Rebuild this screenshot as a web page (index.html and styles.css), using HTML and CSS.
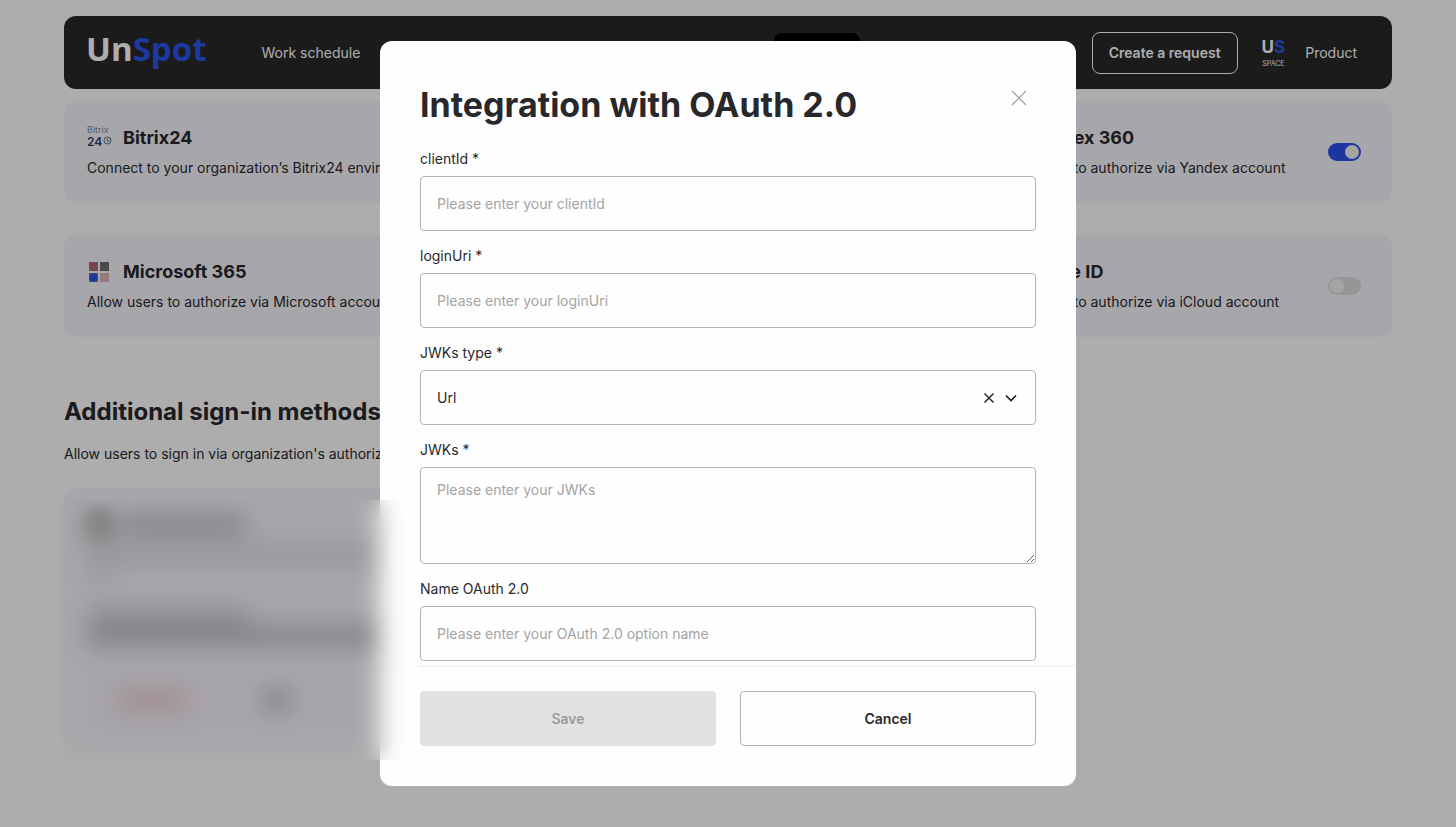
FILE: index.html
```html
<!DOCTYPE html>
<html lang="en">
<head>
<meta charset="utf-8">
<meta name="viewport" content="width=device-width, initial-scale=1">
<title>UnSpot</title>
<link rel="stylesheet" href="styles.css">
</head>
<body>
<div class="page">
  <header class="topbar">
    <a class="logo" href="#">Un<span class="logo-accent">Spot</span></a>
    <nav><a class="nav-link" href="#">Work schedule</a></nav>
    <span class="nav-active"></span>
    <button class="request" type="button">Create a request</button>
    <span class="space-logo"><span class="space-mark">U<span class="logo-accent">S</span></span><span class="space-word">SPACE</span></span>
    <a class="nav-link" href="#">Product</a>
  </header>

  <main>
    <div class="cards">
      <section class="card">
        <div class="card-text">
          <h3 class="card-title">
            <svg class="card-icon" viewBox="0 0 26 24" aria-hidden="true">
              <text class="bx-name" x="0" y="7">Bitrix</text>
              <text class="bx-num" x="0" y="20">24</text>
              <circle cx="20.500" cy="14.500" r="3.500" fill="none" stroke="#5d6c93"/>
              <path d="M20.500 12.500v2.500h2" fill="none" stroke="#5d6c93"/>
            </svg>
            Bitrix24
          </h3>
          <p class="card-desc">Connect to your organization’s Bitrix24 environment</p>
        </div>
      </section>
      <section class="card card-last">
        <div class="card-text">
          <h3 class="card-title"><span class="card-icon"></span>Yandex 360</h3>
          <p class="card-desc">Allow users to authorize via Yandex account</p>
        </div>
        <input class="toggle" type="checkbox" role="switch" aria-label="Yandex 360" checked>
      </section>
      <section class="card">
        <div class="card-text">
          <h3 class="card-title">
            <svg class="card-icon" viewBox="0 0 26 24" aria-hidden="true">
              <path fill="#ad6b74" d="M2 2h9v9H2z"/>
              <path fill="#6b6d70" d="M13 2h9v9h-9z"/>
              <path fill="#757b94" d="M2 13h9v9H2z"/>
              <path fill="#dbb5b4" d="M13 13h9v9h-9z"/>
              <circle cx="6.500" cy="17.500" r="4.300" fill="#2d55e6"/>
            </svg>
            Microsoft 365
          </h3>
          <p class="card-desc">Allow users to authorize via Microsoft account</p>
        </div>
      </section>
      <section class="card card-last">
        <div class="card-text">
          <h3 class="card-title"><span class="card-icon"></span>Apple ID</h3>
          <p class="card-desc">Allow users to authorize via iCloud account</p>
        </div>
        <input class="toggle" type="checkbox" role="switch" aria-label="Apple ID">
      </section>
    </div>

    <h2 class="section-title">Additional sign-in methods</h2>
    <p class="section-desc">Allow users to sign in via organization's authorization</p>
    <div class="method" aria-hidden="true">
      <div class="method-head"><i class="method-icon"></i><i class="method-name"></i></div>
      <i class="line line-full"></i>
      <i class="line line-tail"></i>
      <i class="line line-label"></i>
      <i class="line line-value"></i>
      <div class="method-actions"><i class="action-remove"><i></i></i><i class="action-edit"></i></div>
    </div>
  </main>
</div>

<div class="scrim">
  <form class="modal" role="dialog" aria-labelledby="modal-title">
    <div class="modal-body">
      <div class="modal-head">
        <h1 class="modal-title" id="modal-title">Integration with OAuth 2.0</h1>
        <button class="icon-button close" type="button" aria-label="Close">
          <svg width="16" height="16" viewBox="0 0 16 16"><path d="M1 1l14 14M15 1L1 15" fill="none" stroke="#9a9a9a" stroke-width="1.200"/></svg>
        </button>
      </div>
      <div class="field">
        <label for="client">clientId *</label>
        <input class="control" id="client" type="text" placeholder="Please enter your clientId">
      </div>
      <div class="field">
        <label for="login">loginUri *</label>
        <input class="control" id="login" type="text" placeholder="Please enter your loginUri">
      </div>
      <div class="field">
        <label for="type">JWKs type *</label>
        <div class="select-wrap">
          <select class="control" id="type"><option>Url</option></select>
          <div class="select-icons">
            <button class="icon-button" type="button" aria-label="Clear">
              <svg width="12" height="12" viewBox="0 0 12 12"><path d="M1.500 1.500l9 9M10.500 1.500l-9 9" fill="none" stroke="#28282c" stroke-width="1.500"/></svg>
            </button>
            <svg width="12" height="12" viewBox="0 0 12 12"><path d="M1 3.500l5 5 5-5" fill="none" stroke="#1b1b1e" stroke-width="1.600"/></svg>
          </div>
        </div>
      </div>
      <div class="field">
        <label for="jwks">JWKs *</label>
        <textarea class="control area" id="jwks" placeholder="Please enter your JWKs"></textarea>
      </div>
      <div class="field">
        <label for="name">Name OAuth 2.0</label>
        <input class="control" id="name" type="text" placeholder="Please enter your OAuth 2.0 option name">
      </div>
    </div>
    <div class="modal-foot">
      <button class="button save" type="submit" disabled>Save</button>
      <button class="button cancel" type="button">Cancel</button>
    </div>
  </form>
</div>
<div class="privacy-blur"></div>
</body>
</html>
```

FILE: styles.css
```css
* { box-sizing: border-box; }
body {
  margin: 0;
  min-height: 100vh;
  background: #fff;
  color: #28282c;
  font: 14px/20px Inter, "Open Sans", sans-serif;
}
h1, h2, h3, p { margin: 0; }
button, input, select, textarea { font: inherit; color: inherit; }
.page { padding: 16px 64px; }

.topbar {
  display: flex;
  align-items: center;
  height: 73px;
  padding: 0 35px 0 22px;
  border-radius: 12px;
  background: #282828;
  color: #fff;
}
.logo {
  padding-bottom: 8px;
  margin-right: 55px;
  color: #fff;
  font: 700 33px/40px "Open Sans", sans-serif;
  text-decoration: none;
}
.logo-accent { color: #2b54ec; }
.nav-link { color: #fff; text-decoration: none; }
.nav-active {
  width: 86px;
  height: 40px;
  margin: 0 232px 0 auto;
  border-radius: 8px;
  background: #000;
}
.request {
  height: 42px;
  padding: 0 16px;
  border: 1px solid #fff;
  border-radius: 8px;
  background: none;
  font-weight: 600;
  white-space: nowrap;
}
.space-logo {
  display: flex;
  flex-direction: column;
  align-items: center;
  gap: 1px;
  margin: 0 20px 0 24px;
}
.space-mark { font: 700 17px/21px Inter, sans-serif; }
.space-word { font: 7px/9px Inter, sans-serif; }

.cards {
  display: grid;
  grid-template-columns: repeat(3, 1fr);
  gap: 32px 24px;
  margin-top: 12px;
}
.card {
  display: flex;
  justify-content: space-between;
  align-items: center;
  min-width: 0;
  padding: 25px 31px 25px 23px;
  border-radius: 12px;
  background: #f7f6fd;
}
.card-last { grid-column: 3; padding-left: 28px; }
.card-title {
  display: flex;
  align-items: center;
  gap: 10px;
  margin-bottom: 8px;
  font-size: 18px;
  line-height: 24px;
  font-weight: 700;
}
.card-icon { width: 26px; height: 24px; flex: none; overflow: visible; }
.card-desc { white-space: nowrap; }
.bx-name { font: 9px Inter, sans-serif; fill: #7b8aa8; }
.bx-num { font: 600 12px Inter, sans-serif; fill: #2c3f6e; }

.toggle {
  appearance: none;
  flex: none;
  width: 33px;
  height: 18px;
  margin: 0;
  padding: 2px;
  border-radius: 9px;
  background: #dedede;
}
.toggle::before {
  content: "";
  display: block;
  width: 14px;
  height: 14px;
  border-radius: 50%;
  background: #f2f2f2;
}
.toggle:checked { background: #2950ee; }
.toggle:checked::before { margin-left: auto; }

.section-title {
  margin: 59px 0 16px;
  font-size: 24px;
  line-height: 32px;
  font-weight: 700;
}

.method {
  display: flex;
  flex-direction: column;
  width: 32%;
  height: 262px;
  margin-top: 24px;
  padding: 26px 24px;
  border-radius: 12px;
  background: #f7f6fd;
}
.method > * { filter: blur(5px); }
.method-head { display: flex; align-items: center; gap: 12px; margin-bottom: 12px; }
.method-icon { width: 22px; height: 22px; background: #80807c; }
.method-name { width: 124px; height: 14px; background: #a9a9ae; }
.line { flex: none; background: #d2d1d6; }
.line-full { height: 14px; }
.line-tail { width: 18px; height: 12px; margin-top: 8px; }
.line-label { width: 160px; height: 14px; margin-top: 28px; background: #bebec4; }
.line-value { height: 16px; margin-top: 4px; background: #b0b0b6; }
.method-actions { display: flex; align-items: center; gap: 48px; margin-top: 32px; }
.action-remove {
  display: flex;
  align-items: center;
  justify-content: center;
  width: 128px;
  height: 48px;
  border: 1px solid #ecc9ce;
}
.action-remove i { width: 72px; height: 12px; background: #e8b4ba; }
.action-edit { width: 26px; height: 14px; background: #98989e; }

.scrim {
  position: fixed;
  inset: 0;
  display: flex;
  align-items: center;
  justify-content: center;
  background: rgba(0, 0, 0, .32);
}
.modal {
  width: 696px;
  max-width: 100%;
  border-radius: 12px;
  background: #fefefe;
}
.modal-body {
  display: flex;
  flex-direction: column;
  gap: 15px;
  padding: 44px 40px 4px;
}
.modal-head {
  display: flex;
  justify-content: space-between;
  margin-bottom: 9px;
}
.modal-title { font-size: 34px; line-height: 40px; font-weight: 700; }
.icon-button {
  display: flex;
  padding: 0;
  border: 0;
  background: none;
}
.close { align-self: flex-start; margin: 5px 9px 0 0; }
.field { display: flex; flex-direction: column; gap: 7px; }
.control {
  display: block;
  width: 100%;
  height: 55px;
  padding: 0 16px;
  border: 1px solid #b4b4b6;
  border-radius: 4px;
  background: #fefefe;
  appearance: none;
}
.control::placeholder { color: #a4a4a4; opacity: 1; }
.area { height: 97px; padding: 12px 16px; resize: vertical; }
.select-wrap { position: relative; }
.select-icons {
  position: absolute;
  inset: 0 19px 0 auto;
  display: flex;
  align-items: center;
  gap: 10px;
}
.modal-foot {
  display: grid;
  grid-template-columns: 1fr 1fr;
  gap: 24px;
  padding: 24px 40px 40px;
  border-top: 2px solid #f4f4f4;
}
.button {
  height: 55px;
  border: 1px solid #b4b4b6;
  border-radius: 4px;
  background: #fefefe;
  font-weight: 600;
}
.save { border-color: #e2e2e2; background: #e2e2e2; color: #9c9c9c; }

.privacy-blur {
  position: absolute;
  left: 60px;
  top: 500px;
  width: 360px;
  height: 260px;
  backdrop-filter: blur(12px);
}
```
